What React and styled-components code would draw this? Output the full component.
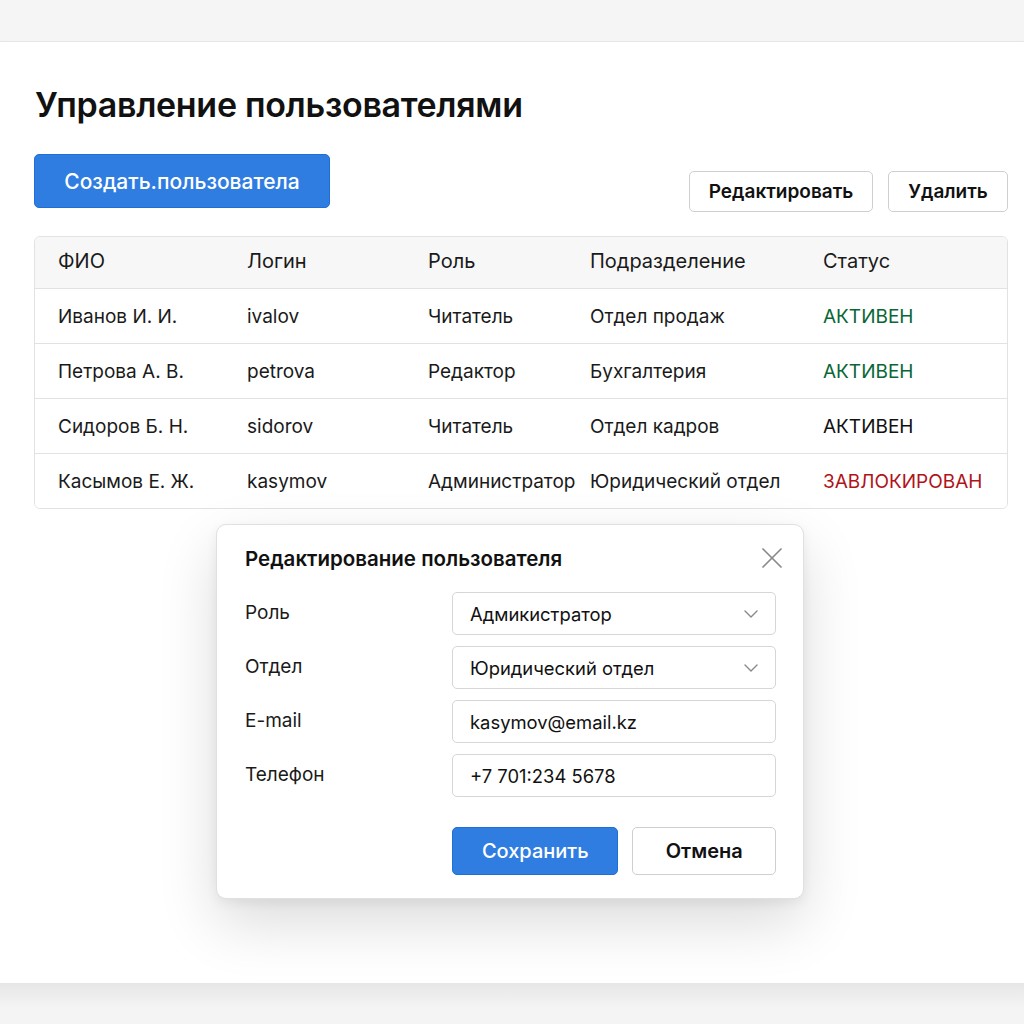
import React from 'react';
import styled, { createGlobalStyle } from 'styled-components';
import { ChevronDown, X } from 'lucide-react';

const GlobalStyle = createGlobalStyle`
  body {
    margin: 0;
    background: #f3f3f3;
    font-family: Inter, "Noto Sans", "Liberation Sans", sans-serif;
    color: #111;
  }
`;

const TopBand = styled.div`
  height: 41px;
  background: #f5f5f5;
  border-bottom: 1px solid #e9e9e9;
`;

const Panel = styled.main`
  background: #fff;
  height: 941px;
  box-sizing: border-box;
  padding: 43px 16px 0 34px;
  display: flex;
  flex-direction: column;
  box-shadow: 0 2px 4px rgba(0, 0, 0, 0.12);
`;

const BottomBand = styled.div`
  height: 41px;
  background: linear-gradient(#e6e6e6, #f4f4f4 60%);
`;

const Title = styled.h1`
  margin: 0 0 0 1px;
  font-size: 34px;
  font-weight: 600;
  line-height: 40px;
  letter-spacing: -0.3px;
`;

const Toolbar = styled.div`
  display: flex;
  justify-content: space-between;
  align-items: flex-start;
  margin-top: 29px;
`;

const Actions = styled.div`
  display: flex;
  gap: 15px;
  margin-top: 17px;
`;

const Button = styled.button`
  font-family: inherit;
  box-sizing: border-box;
  border-radius: 5px;
  cursor: pointer;
  display: inline-flex;
  align-items: center;
  justify-content: center;
  background: ${p => (p.$primary ? '#2f7de1' : '#fff')};
  color: ${p => (p.$primary ? '#fff' : '#111')};
  border: 1px solid ${p => (p.$primary ? '#1f6fd6' : '#cfcfcf')};
  font-size: ${p => p.$size || 19}px;
  font-weight: ${p => (p.$primary ? 500 : 600)};
  width: ${p => p.$w}px;
  height: ${p => p.$h}px;
  padding: 0;
`;

const Table = styled.div`
  margin-top: 24px;
  border: 1px solid #e2e2e2;
  border-radius: 6px;
  overflow: hidden;
`;

const Row = styled.div`
  display: grid;
  grid-template-columns: 189px 181px 162px 233px 1fr;
  align-items: center;
  height: ${p => (p.$head ? 51 : 54)}px;
  padding-left: 23px;
  padding-bottom: ${p => (p.$head ? 3 : 0)}px;
  box-sizing: ${p => (p.$head ? 'border-box' : 'content-box')};
  background: ${p => (p.$head ? '#f7f7f7' : '#fff')};
  font-size: ${p => (p.$head ? 20 : 19)}px;
  font-weight: 400;
  color: #1a1a1a;
  & + & {
    border-top: 1px solid #e2e2e2;
  }
`;

const Cell = styled.div`
  white-space: nowrap;
`;

const Status = styled(Cell)`
  color: ${p => p.$color};
`;

const ModalWrap = styled.div`
  display: flex;
  justify-content: center;
  margin-top: 15px;
  padding-right: 22px;
`;

const Modal = styled.section`
  width: 588px;
  box-sizing: border-box;
  background: #fff;
  border: 1px solid #e0e0e0;
  border-radius: 10px;
  padding: 20px 27px 23px 28px;
  box-shadow: 0 24px 60px rgba(0, 0, 0, 0.14), 0 4px 12px rgba(0, 0, 0, 0.06);
`;

const ModalHeader = styled.div`
  display: flex;
  justify-content: space-between;
  align-items: center;
  height: 26px;
`;

const ModalTitle = styled.h2`
  margin: 0;
  font-size: 20.5px;
  font-weight: 600;
`;

const CloseButton = styled.button`
  border: none;
  background: none;
  padding: 0;
  margin-right: -14px;
  display: flex;
  color: #8a8a8a;
  cursor: pointer;
`;

const Form = styled.div`
  display: grid;
  grid-template-columns: 207px 1fr;
  row-gap: 11px;
  align-items: center;
  margin-top: 21px;
`;

const Label = styled.label`
  font-size: 19px;
  color: #1a1a1a;
  margin-top: -3px;
`;

const Field = styled.div`
  height: 43px;
  box-sizing: border-box;
  border: 1px solid #d6d6d6;
  border-radius: 5px;
  display: flex;
  align-items: center;
  justify-content: space-between;
  padding: 0 12px 0 17px;
  font-size: 18.4px;
  color: #111;
`;

const Footer = styled.div`
  display: flex;
  gap: 14px;
  margin-top: 30px;
  padding-left: 207px;
`;

const users = [
  { name: 'Иванов И. И.', login: 'ivalov', role: 'Читатель', dept: 'Отдел продаж', status: 'АКТИВЕН', color: '#0a6635' },
  { name: 'Петрова А. В.', login: 'petrova', role: 'Редактор', dept: 'Бухгалтерия', status: 'АКТИВЕН', color: '#0a6635' },
  { name: 'Сидоров Б. Н.', login: 'sidorov', role: 'Читатель', dept: 'Отдел кадров', status: 'АКТИВЕН', color: '#111' },
  { name: 'Касымов Е. Ж.', login: 'kasymov', role: 'Администратор', dept: 'Юридический отдел', status: 'ЗАВЛОКИРОВАН', color: '#b0141b' },
];

const fields = [
  { label: 'Роль', value: 'Адмикистратор', select: true },
  { label: 'Отдел', value: 'Юридический отдел', select: true },
  { label: 'E-mail', value: 'kasymov@email.kz' },
  { label: 'Телефон', value: '+7 701:234 5678' },
];

export default function App() {
  return (
    <>
      <GlobalStyle />
      <TopBand />
      <Panel>
        <Title>Управление пользователями</Title>
        <Toolbar>
          <Button $primary $w={296} $h={54} $size={21}>Создать.пользователа</Button>
          <Actions>
            <Button $w={184} $h={41}>Редактировать</Button>
            <Button $w={120} $h={41}>Удалить</Button>
          </Actions>
        </Toolbar>
        <Table>
          <Row $head>
            <Cell>ФИО</Cell>
            <Cell>Логин</Cell>
            <Cell>Роль</Cell>
            <Cell>Подразделение</Cell>
            <Cell>Статус</Cell>
          </Row>
          {users.map(u => (
            <Row key={u.login}>
              <Cell>{u.name}</Cell>
              <Cell>{u.login}</Cell>
              <Cell>{u.role}</Cell>
              <Cell>{u.dept}</Cell>
              <Status $color={u.color}>{u.status}</Status>
            </Row>
          ))}
        </Table>
        <ModalWrap>
          <Modal>
            <ModalHeader>
              <ModalTitle>Редактирование пользователя</ModalTitle>
              <CloseButton aria-label="Закрыть">
                <X size={36} strokeWidth={1.15} />
              </CloseButton>
            </ModalHeader>
            <Form>
              {fields.map(f => (
                <React.Fragment key={f.label}>
                  <Label>{f.label}</Label>
                  <Field>
                    <span>{f.value}</span>
                    {f.select && <ChevronDown size={24} color="#888" strokeWidth={1.4} />}
                  </Field>
                </React.Fragment>
              ))}
            </Form>
            <Footer>
              <Button $primary $w={167} $h={48} $size={20}>Сохранить</Button>
              <Button $w={144} $h={48} $size={20}>Отмена</Button>
            </Footer>
          </Modal>
        </ModalWrap>
      </Panel>
      <BottomBand />
    </>
  );
}
